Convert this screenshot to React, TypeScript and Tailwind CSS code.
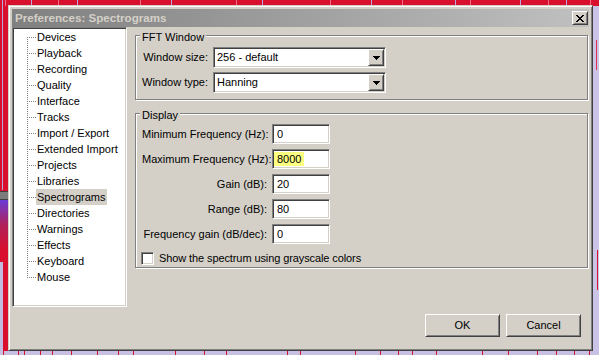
import type { ReactNode } from 'react'

const face = 'bg-[#d4d0c8]'
const sunken =
  'border border-t-[#808080] border-l-[#808080] border-r-white border-b-white shadow-[inset_1px_1px_0_#404040,inset_-1px_-1px_0_#d4d0c8]'
const raised =
  'border border-t-white border-l-white border-r-[#404040] border-b-[#404040] shadow-[inset_1px_1px_0_#d4d0c8,inset_-1px_-1px_0_#808080]'
const etched = 'border border-[#808080] shadow-[inset_1px_1px_0_#fff,1px_1px_0_#fff]'

const treeItems = [
  'Devices',
  'Playback',
  'Recording',
  'Quality',
  'Interface',
  'Tracks',
  'Import / Export',
  'Extended Import',
  'Projects',
  'Libraries',
  'Spectrograms',
  'Directories',
  'Warnings',
  'Effects',
  'Keyboard',
  'Mouse',
]

const displayRows = [
  { label: 'Minimum Frequency (Hz):', value: '0' },
  { label: 'Maximum Frequency (Hz):', value: '8000', selected: true },
  { label: 'Gain (dB):', value: '20' },
  { label: 'Range (dB):', value: '80' },
  { label: 'Frequency gain (dB/dec):', value: '0' },
]

function Backdrop() {
  const streaks = [2, 5, 31, 58, 77, 140, 171, 236, 262, 330, 371, 402, 455, 470, 520, 548, 566, 590]
  const bottomLines = [3, 18, 24, 40, 52, 71, 97, 118, 133, 175, 204, 226, 287, 300, 355, 380, 398, 412, 436, 482, 508, 537, 556, 574, 589]
  return (
    <svg className="absolute inset-0" width="599" height="355" shapeRendering="crispEdges">
      <defs>
        <linearGradient id="fade" x1="0" y1="0" x2="0" y2="1">
          <stop offset="0" stopColor="#6a3cd8" />
          <stop offset="0.5" stopColor="#b0205a" />
          <stop offset="1" stopColor="#d8102e" />
        </linearGradient>
      </defs>
      <rect width="599" height="355" fill="#d8102e" />
      {streaks.map((x, i) => (
        <rect key={x} x={x} y={0} width={1} height={i % 3 === 0 ? 190 : 6} fill={i % 2 ? '#f06a8c' : '#b8a8dc'} />
      ))}
      <rect x={0} y={191} width={8} height={1} fill="#404040" />
      <rect x={0} y={192} width={8} height={7} fill="#7c7c7c" />
      <rect x={0} y={199} width={8} height={1} fill="#404040" />
      <rect x={0} y={200} width={8} height={50} fill="url(#fade)" />
      <rect x={0} y={262} width={3} height={93} fill="#c4bce0" />
      <rect x={593} y={6} width={6} height={349} fill="#ccc4e6" />
      <rect x={596} y={40} width={1} height={30} fill="#e0304c" />
      <rect x={597} y={250} width={1} height={40} fill="#d8102e" />
      <rect x={0} y={351} width={599} height={4} fill="#c8c0e4" />
      {bottomLines.map((x) => (
        <rect key={x} x={x} y={351} width={1} height={4} fill="#d8102e" />
      ))}
    </svg>
  )
}

function TreeLine({ first, last }: { first: boolean; last: boolean }) {
  return (
    <svg width="9" height="16" className="shrink-0">
      <line x1="0.5" y1={first ? 8 : 0} x2="0.5" y2={last ? 9 : 16} stroke="#808080" strokeDasharray="1 1" />
      <line x1="0" y1="8.5" x2="9" y2="8.5" stroke="#808080" strokeDasharray="1 1" />
    </svg>
  )
}

function DownArrow() {
  return (
    <svg width="7" height="4" shapeRendering="crispEdges">
      <path d="M0 0h7v1h-1v1h-1v1h-1v1h-1v-1h-1v-1h-1v-1h-1z" fill="#000" />
    </svg>
  )
}

function CloseGlyph() {
  return (
    <svg width="8" height="7" shapeRendering="crispEdges">
      <path
        d="M0 0h2v1h1v1h2v-1h1v-1h2v1h-1v1h-1v1h-1v1h1v1h1v1h1v1h-2v-1h-1v-1h-2v1h-1v1h-2v-1h1v-1h1v-1h1v-1h-1v-1h-1v-1h-1z"
        fill="#000"
      />
    </svg>
  )
}

function Combo({ value }: { value: string }) {
  return (
    <div className={`${sunken} p-[1px] w-[173px] h-[21px] bg-white flex`}>
      <div className="flex-1 flex items-center pl-[2px]">{value}</div>
      <div className={`${raised} ${face} w-[16px] h-full flex items-center justify-center`}>
        <DownArrow />
      </div>
    </div>
  )
}

function Group({ title, className, children }: { title: string; className: string; children: ReactNode }) {
  return (
    <div className={`${etched} w-[453px] ${className}`}>
      <div className={`${face} -mt-[5px] ml-[4px] px-[2px] w-fit leading-[13px]`}>{title}</div>
      {children}
    </div>
  )
}

function Button({ children }: { children: ReactNode }) {
  return (
    <div className={`${raised} ${face} w-[75px] h-[23px] flex items-center justify-center`}>{children}</div>
  )
}

export default function App() {
  return (
    <div
      className="relative w-[599px] h-[355px] overflow-hidden text-[11px] text-black"
      style={{ fontFamily: '"Liberation Sans", Arial, sans-serif' }}
    >
      <Backdrop />
      <div
        className={`absolute left-[8px] top-[5px] w-[585px] h-[346px] ${face} border border-t-[#d4d0c8] border-l-[#d4d0c8] border-r-[#404040] border-b-[#404040] shadow-[inset_1px_1px_0_#fff,inset_-1px_-1px_0_#808080] p-[3px] flex flex-col`}
      >
        <div className="h-[18px] flex items-center justify-between bg-gradient-to-r from-[#808080] to-[#c0c0c0] pl-[3px] pr-[1px]">
          <span className="font-bold text-[11.6px] text-[#d4d0c8]">Preferences: Spectrograms</span>
          <div className={`${raised} ${face} w-[16px] h-[14px] flex items-center justify-center`}>
            <CloseGlyph />
          </div>
        </div>

        <div className="flex h-[280px]">
          <div className={`${sunken} p-[1px] w-[115px] h-[280px] bg-white`}>
            {treeItems.map((item, i) => (
              <div key={item} className="flex h-[16px] items-center leading-[16px]">
                <div className="w-[13px] shrink-0" />
                <TreeLine first={i === 0} last={i === treeItems.length - 1} />
                <span className={`pl-[1px] pr-[2px] whitespace-nowrap ${item === 'Spectrograms' ? face : ''}`}>
                  {item}
                </span>
              </div>
            ))}
          </div>

          <div className="pl-[8px] pt-[8px] flex flex-col">
            <Group title="FFT Window" className="h-[65px]">
              <div className="flex flex-col gap-[4px] mt-[3px]">
                {['Window size:', 'Window type:'].map((label, i) => (
                  <div key={label} className="flex items-center gap-[5px]">
                    <div className="w-[66px] ml-[6px] text-right whitespace-nowrap">{label}</div>
                    <Combo value={i === 0 ? '256 - default' : 'Hanning'} />
                  </div>
                ))}
              </div>
            </Group>

            <Group title="Display" className="h-[155px] mt-[13px]">
              <div className="flex flex-col gap-[5px] mt-[2px]">
                {displayRows.map((row) => (
                  <div key={row.label} className="flex items-center gap-[5px]">
                    <div className="w-[125px] ml-[6px] text-right whitespace-nowrap">{row.label}</div>
                    <div className={`${sunken} p-[1px] w-[58px] h-[20px] bg-white flex items-center`}>
                      <span className={`px-[3px] h-[14px] leading-[14px] ${row.selected ? 'bg-[#ffff80]' : ''}`}>
                        {row.value}
                      </span>
                    </div>
                  </div>
                ))}
              </div>
              <div className="flex items-center gap-[5px] mt-[6px] ml-[5px]">
                <div className={`${sunken} w-[13px] h-[13px] bg-white`} />
                <span className="tracking-[-0.1px]">Show the spectrum using grayscale colors</span>
              </div>
            </Group>
          </div>
        </div>

        <div className="flex justify-end gap-[6px] mt-[7px] pr-[8px]">
          <Button>OK</Button>
          <Button>Cancel</Button>
        </div>
      </div>
    </div>
  )
}
